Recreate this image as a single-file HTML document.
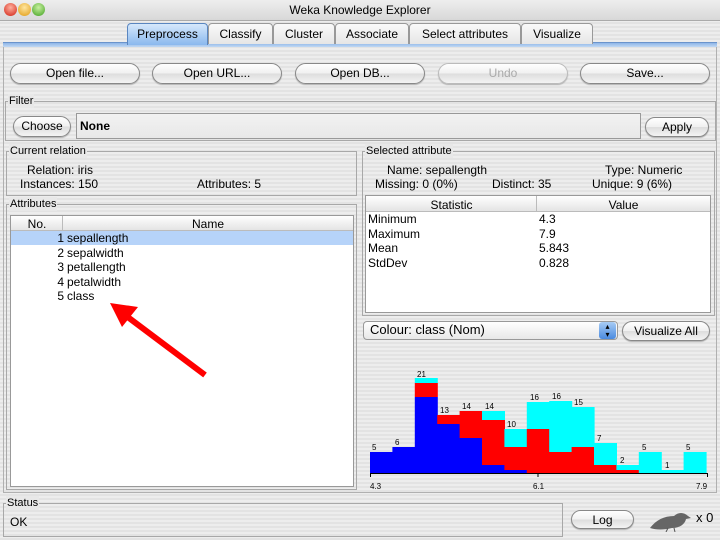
<!DOCTYPE html>
<html><head><meta charset="utf-8"><style>
*{box-sizing:border-box;margin:0;padding:0}
body{width:720px;height:540px;overflow:hidden;position:relative;font-family:"Liberation Sans",sans-serif;font-size:12px;color:#000;
background:repeating-linear-gradient(#ededed 0 2px,#e3e3e3 2px 4px)}
.a{position:absolute}
.t{position:absolute;white-space:nowrap;line-height:14px}
.btn{position:absolute;border:1px solid #888;border-radius:11px;background:linear-gradient(#fff,#f0f0f0 50%,#ddd 51%,#f4f4f4);text-align:center;line-height:18px;font-size:12px;box-shadow:0 1px 1px rgba(0,0,0,.25)}
.grp{position:absolute;border:1px solid #a8a8a8}
.lbl{position:absolute;top:-8px;left:2px;font-size:11px;line-height:14px;padding:0 1px;background:#e8e8e8}
.tab{position:absolute;top:23px;height:21px;border:1px solid #999;border-bottom:none;border-radius:4px 4px 0 0;background:linear-gradient(#fafafa,#e6e6e6);text-align:center;line-height:20px;font-size:12px}
.white{position:absolute;background:#fff;border:1px solid #999}
</style></head><body>
<!-- title bar -->
<div class="a" style="left:0;top:0;width:720px;height:21px;background:linear-gradient(#eee,#d8d8d8);border-bottom:1px solid #aaa"></div>
<div class="a" style="left:4px;top:3px;width:13px;height:13px;border-radius:50%;background:radial-gradient(circle at 50% 35%,#ffb0a0,#d02010)"></div>
<div class="a" style="left:18px;top:3px;width:13px;height:13px;border-radius:50%;background:radial-gradient(circle at 50% 35%,#ffe6a0,#e09a10)"></div>
<div class="a" style="left:32px;top:3px;width:13px;height:13px;border-radius:50%;background:radial-gradient(circle at 50% 35%,#c8f0a0,#40a020)"></div>
<div class="t" style="left:0;width:720px;text-align:center;top:3px;font-size:12px">Weka Knowledge Explorer</div>
<!-- tabs -->
<div class="a" style="left:3px;top:42px;width:714px;height:5px;background:linear-gradient(#8fb6e8,#c0d8f4);border-top:1px solid #6a94cc"></div>
<div class="tab" style="left:127px;width:81px;background:linear-gradient(#d6e8fb,#8ab8ee);border-color:#5a86c0;height:22px">Preprocess</div>
<div class="tab" style="left:208px;width:65px">Classify</div>
<div class="tab" style="left:273px;width:62px">Cluster</div>
<div class="tab" style="left:335px;width:74px">Associate</div>
<div class="tab" style="left:409px;width:112px">Select attributes</div>
<div class="tab" style="left:521px;width:72px">Visualize</div>
<div class="a" style="left:3px;top:47px;width:714px;height:446px;border:1px solid #b0b0b0;border-top:none"></div>
<!-- buttons -->
<div class="btn" style="left:10px;top:63px;width:130px;height:21px">Open file...</div>
<div class="btn" style="left:152px;top:63px;width:130px;height:21px">Open URL...</div>
<div class="btn" style="left:295px;top:63px;width:130px;height:21px">Open DB...</div>
<div class="btn" style="left:438px;top:63px;width:130px;height:21px;color:#aaa;border-color:#bbb">Undo</div>
<div class="btn" style="left:580px;top:63px;width:130px;height:21px">Save...</div>
<!-- filter -->
<div class="grp" style="left:5px;top:101px;width:711px;height:40px"><div class="lbl">Filter</div></div>
<div class="btn" style="left:13px;top:116px;width:58px;height:21px">Choose</div>
<div class="a" style="left:76px;top:113px;width:565px;height:26px;border:1px solid #999;background:linear-gradient(#f2f2f2,#e8e8e8)"></div>
<div class="t" style="left:80px;top:119px;font-weight:bold">None</div>
<div class="btn" style="left:645px;top:117px;width:64px;height:20px">Apply</div>
<!-- current relation -->
<div class="grp" style="left:6px;top:151px;width:351px;height:45px"><div class="lbl">Current relation</div></div>
<div class="t" style="left:27px;top:163px">Relation: iris</div>
<div class="t" style="left:20px;top:177px">Instances: 150</div>
<div class="t" style="left:197px;top:177px">Attributes: 5</div>
<!-- attributes -->
<div class="grp" style="left:6px;top:204px;width:351px;height:286px"><div class="lbl">Attributes</div></div>
<div class="white" style="left:10px;top:215px;width:344px;height:272px"></div>
<div class="a" style="left:11px;top:216px;width:52px;height:15px;background:linear-gradient(#fff,#e4e4e4);border-right:1px solid #bbb;border-bottom:1px solid #bbb"></div>
<div class="a" style="left:63px;top:216px;width:290px;height:15px;background:linear-gradient(#fff,#e4e4e4);border-bottom:1px solid #bbb"></div>
<div class="t" style="left:11px;width:52px;text-align:center;top:217px">No.</div>
<div class="t" style="left:63px;width:290px;text-align:center;top:217px">Name</div>
<div class="a" style="left:11px;top:231px;width:342px;height:14px;background:#b6d3f9"></div>
<div class="t" style="left:40px;width:24px;text-align:right;top:231px;line-height:14.6px">1<br>2<br>3<br>4<br>5</div>
<div class="t" style="left:67px;top:231px;line-height:14.6px">sepallength<br>sepalwidth<br>petallength<br>petalwidth<br>class</div>
<svg class="a" style="left:100px;top:295px" width="115" height="90"><line x1="105" y1="80" x2="25" y2="20" stroke="#f00" stroke-width="6"/><polygon points="10,8 38,12 22,32" fill="#f00"/></svg>
<!-- selected attribute -->
<div class="grp" style="left:362px;top:151px;width:353px;height:165px"><div class="lbl">Selected attribute</div></div>
<div class="t" style="left:387px;top:163px">Name: sepallength</div>
<div class="t" style="left:605px;top:163px">Type: Numeric</div>
<div class="t" style="left:375px;top:177px">Missing: 0 (0%)</div>
<div class="t" style="left:492px;top:177px">Distinct: 35</div>
<div class="t" style="left:592px;top:177px">Unique: 9 (6%)</div>
<div class="white" style="left:365px;top:195px;width:346px;height:118px"></div>
<div class="a" style="left:366px;top:196px;width:171px;height:16px;background:linear-gradient(#fff,#e4e4e4);border-right:1px solid #bbb;border-bottom:1px solid #bbb"></div>
<div class="a" style="left:537px;top:196px;width:173px;height:16px;background:linear-gradient(#fff,#e4e4e4);border-bottom:1px solid #bbb"></div>
<div class="t" style="left:366px;width:171px;text-align:center;top:198px">Statistic</div>
<div class="t" style="left:537px;width:173px;text-align:center;top:198px">Value</div>
<div class="t" style="left:368px;top:212px;line-height:14.5px">Minimum<br>Maximum<br>Mean<br>StdDev</div>
<div class="t" style="left:539px;top:212px;line-height:14.5px">4.3<br>7.9<br>5.843<br>0.828</div>
<!-- combo -->
<div class="a" style="left:363px;top:321px;width:255px;height:19px;border:1px solid #999;border-radius:4px;background:linear-gradient(#fff,#e8e8e8)"></div>
<div class="t" style="left:370px;top:323px;font-size:13px">Colour: class (Nom)</div>
<div class="a" style="left:599px;top:322px;width:17px;height:17px;border-radius:3px;background:linear-gradient(#a8ccf4,#4a8ae0);color:#000;font-size:8px;text-align:center;line-height:8px;padding-top:1px">▴<br>▾</div>
<div class="btn" style="left:622px;top:321px;width:88px;height:20px">Visualize All</div>
<!-- histogram -->
<svg class="a" style="left:360px;top:360px" width="360" height="135" font-family="Liberation Sans" font-size="8">
<g transform="translate(-360,-360)">
<rect x="370" y="452" width="23" height="21" fill="#00f"/>
<rect x="392.4" y="447" width="23" height="26" fill="#00f"/>
<rect x="414.8" y="378" width="23" height="5" fill="#0ff"/><rect x="414.8" y="383" width="23" height="14" fill="#f00"/><rect x="414.8" y="397" width="23" height="76" fill="#00f"/>
<rect x="437.2" y="415" width="23" height="9" fill="#f00"/><rect x="437.2" y="424" width="23" height="49" fill="#00f"/>
<rect x="459.6" y="411" width="23" height="27" fill="#f00"/><rect x="459.6" y="438" width="23" height="35" fill="#00f"/>
<rect x="482" y="411" width="23" height="9" fill="#0ff"/><rect x="482" y="420" width="23" height="45" fill="#f00"/><rect x="482" y="465" width="23" height="8" fill="#00f"/>
<rect x="504.4" y="429" width="23" height="18" fill="#0ff"/><rect x="504.4" y="447" width="23" height="23" fill="#f00"/><rect x="504.4" y="470" width="23" height="3" fill="#00f"/>
<rect x="526.8" y="402" width="23" height="27" fill="#0ff"/><rect x="526.8" y="429" width="23" height="44" fill="#f00"/>
<rect x="549.2" y="401" width="23" height="51" fill="#0ff"/><rect x="549.2" y="452" width="23" height="21" fill="#f00"/>
<rect x="571.6" y="407" width="23" height="40" fill="#0ff"/><rect x="571.6" y="447" width="23" height="26" fill="#f00"/>
<rect x="594" y="443" width="23" height="22" fill="#0ff"/><rect x="594" y="465" width="23" height="8" fill="#f00"/>
<rect x="616.4" y="465" width="23" height="5" fill="#0ff"/><rect x="616.4" y="470" width="23" height="3" fill="#f00"/>
<rect x="638.8" y="452" width="23" height="21" fill="#0ff"/>
<rect x="661.2" y="470" width="23" height="3" fill="#0ff"/>
<rect x="683.6" y="452" width="23" height="21" fill="#0ff"/>
<path d="M370.5 477V473.5H707.5V477M538 473.5V477" stroke="#000" fill="none"/>
<g fill="#000">
<text x="372" y="450">5</text><text x="395" y="445">6</text><text x="417" y="377">21</text><text x="440" y="413">13</text>
<text x="462" y="409">14</text><text x="485" y="409">14</text><text x="507" y="427">10</text><text x="530" y="400">16</text>
<text x="552" y="399">16</text><text x="574" y="405">15</text><text x="597" y="441">7</text><text x="620" y="463">2</text>
<text x="642" y="450">5</text><text x="665" y="468">1</text><text x="686" y="450">5</text>
<text x="370" y="489">4.3</text><text x="533" y="489">6.1</text><text x="696" y="489">7.9</text></g>
</g></svg>
<!-- status -->
<div class="grp" style="left:3px;top:503px;width:560px;height:34px"><div class="lbl">Status</div></div>
<div class="t" style="left:10px;top:515px">OK</div>
<div class="btn" style="left:571px;top:510px;width:63px;height:19px">Log</div>
<svg class="a" style="left:648px;top:508px" width="45" height="24"><path d="M2 20C8 12 16 8 26 8C30 4 36 4 40 8L43 10L38 11C37 16 32 20 24 20C16 22 8 22 2 20Z" fill="#666"/><path d="M20 20L18 24M26 20L27 24" stroke="#555"/></svg>
<div class="t" style="left:696px;top:511px;font-size:13px">x 0</div>
</body></html>
